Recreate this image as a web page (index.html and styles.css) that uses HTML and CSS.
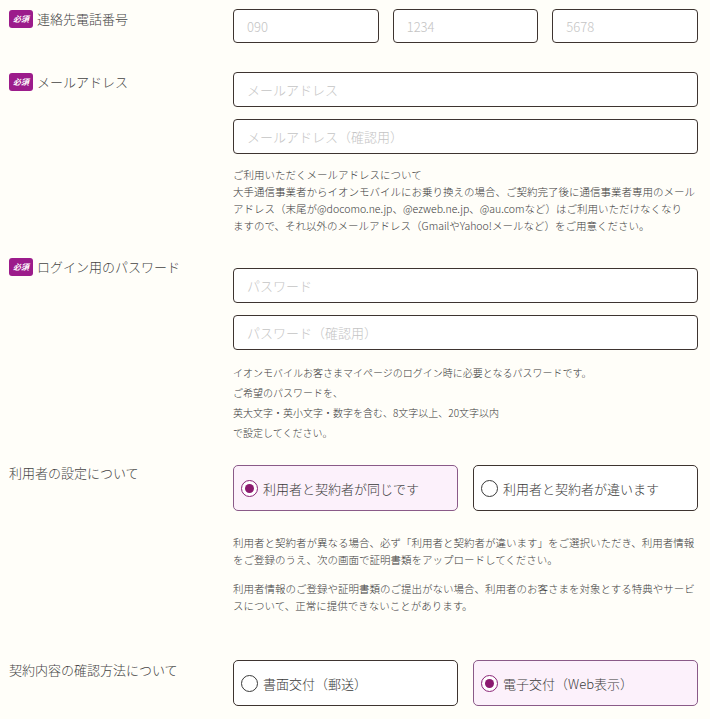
FILE: index.html
```html
<!DOCTYPE html>
<html lang="ja">
<head>
  <meta charset="UTF-8" />
  <meta name="viewport" content="width=device-width, initial-scale=1.0"/>
  <title>お客さま情報の入力</title>
  <link rel="stylesheet" href="styles.css">
</head>
<body>
  <div class="form">
    <div class="row row-tel">
      <div class="label"><span class="req">必須</span>連絡先電話番号</div>
      <div class="field">
        <div class="tel-group">
          <input type="text" class="input" placeholder="090" />
          <input type="text" class="input" placeholder="1234" />
          <input type="text" class="input" placeholder="5678" />
        </div>
      </div>
    </div>

    <div class="row row-mail">
      <div class="label"><span class="req">必須</span>メールアドレス</div>
      <div class="field">
        <input type="email" class="input" placeholder="メールアドレス" />
        <input type="email" class="input" placeholder="メールアドレス（確認用）" />
        <p class="note">ご利用いただくメールアドレスについて<br>大手通信事業者からイオンモバイルにお乗り換えの場合、ご契約完了後に通信事業者専用のメール<br>アドレス（末尾が@docomo.ne.jp、@ezweb.ne.jp、@au.comなど）はご利用いただけなくなり<br>ますので、それ以外のメールアドレス（GmailやYahoo!メールなど）をご用意ください。</p>
      </div>
    </div>

    <div class="row row-pass">
      <div class="label"><span class="req">必須</span>ログイン用のパスワード</div>
      <div class="field">
        <input type="password" class="input" placeholder="パスワード" />
        <input type="password" class="input" placeholder="パスワード（確認用）" />
        <p class="note note-small">イオンモバイルお客さまマイページのログイン時に必要となるパスワードです。<br>ご希望のパスワードを、<br>英大文字・英小文字・数字を含む、8文字以上、20文字以内<br>で設定してください。</p>
      </div>
    </div>

    <div class="row row-user">
      <div class="label">利用者の設定について</div>
      <div class="field">
        <div class="choice-group">
          <label class="choice checked"><span class="radio"></span>利用者と契約者が同じです</label>
          <label class="choice"><span class="radio"></span>利用者と契約者が違います</label>
        </div>
        <p class="note note-first">利用者と契約者が異なる場合、必ず「利用者と契約者が違います」をご選択いただき、利用者情報をご登録のうえ、次の画面で証明書類をアップロードしてください。</p>
        <p class="note">利用者情報のご登録や証明書類のご提出がない場合、利用者のお客さまを対象とする特典やサービスについて、正常に提供できないことがあります。</p>
      </div>
    </div>

    <div class="row row-doc">
      <div class="label">契約内容の確認方法について</div>
      <div class="field">
        <div class="choice-group">
          <label class="choice"><span class="radio"></span>書面交付（郵送）</label>
          <label class="choice checked"><span class="radio"></span>電子交付（Web表示）</label>
        </div>
      </div>
    </div>
  </div>
</body>
</html>
```

FILE: styles.css
```css
* { box-sizing: border-box; }
body {
  margin: 0;
  padding: 9px 12px 0 9px;
  background: #fffef9;
  color: #3a3a3a;
  font-family: "Noto Sans CJK JP", "Noto Sans", sans-serif;
  font-weight: 300;
}
.row {
  display: grid;
  grid-template-columns: 224px 465px;
}
.row-mail { margin-top: 29px; }
.row-pass { margin-top: 34px; }
.row-user { margin-top: 22px; }
.row-doc { margin-top: 46px; }
.label {
  font-size: 13px;
  line-height: 20px;
  color: #444;
  display: flex;
  align-items: center;
  align-self: start;
}
.row-pass .label { margin-top: -11px; }
.row-user .label { margin-top: -2px; }
.req {
  display: inline-block;
  width: 24px;
  height: 18px;
  line-height: 18px;
  margin-right: 4px;
  border-radius: 3px;
  background: #9c1c8b;
  color: #fff;
  font-size: 8px;
  font-weight: bold;
  font-style: italic;
  text-align: center;
}
.field {
  display: flex;
  flex-direction: column;
  gap: 12px;
}
.tel-group {
  display: flex;
  gap: 14px;
}
.input {
  width: 100%;
  height: 35px;
  padding: 0 13px;
  border: 1px solid #3e3430;
  border-radius: 4px;
  background: #fff;
  font-family: inherit;
  font-weight: 300;
  font-size: 13px;
  color: #333;
}
.tel-group .input { height: 34px; }
.input::placeholder { color: #c4c4c4; }
.note {
  margin: 0;
  font-size: 10.5px;
  line-height: 17px;
  color: #3a3a3a;
}
.note-small {
  font-size: 10px;
  line-height: 20px;
  margin-top: 1px;
}
.note-first { margin-top: 11px; }
.choice-group {
  display: flex;
  gap: 15px;
}
.choice {
  flex: 1;
  height: 46px;
  display: flex;
  align-items: center;
  gap: 5px;
  padding-left: 7px;
  border: 1px solid #3e3430;
  border-radius: 5px;
  background: #fff;
  font-size: 13px;
  color: #3a3a3a;
  cursor: pointer;
}
.radio {
  width: 17px;
  height: 17px;
  border: 1.2px solid #3a3a3a;
  border-radius: 50%;
  background: #fff;
  display: flex;
  align-items: center;
  justify-content: center;
}
.choice.checked {
  background: #fcf1fb;
  border-color: #8a5a88;
}
.choice.checked .radio { border-color: #8b2477; }
.choice.checked .radio::after {
  content: "";
  width: 9px;
  height: 9px;
  border-radius: 50%;
  background: #8b1a6f;
}
```
